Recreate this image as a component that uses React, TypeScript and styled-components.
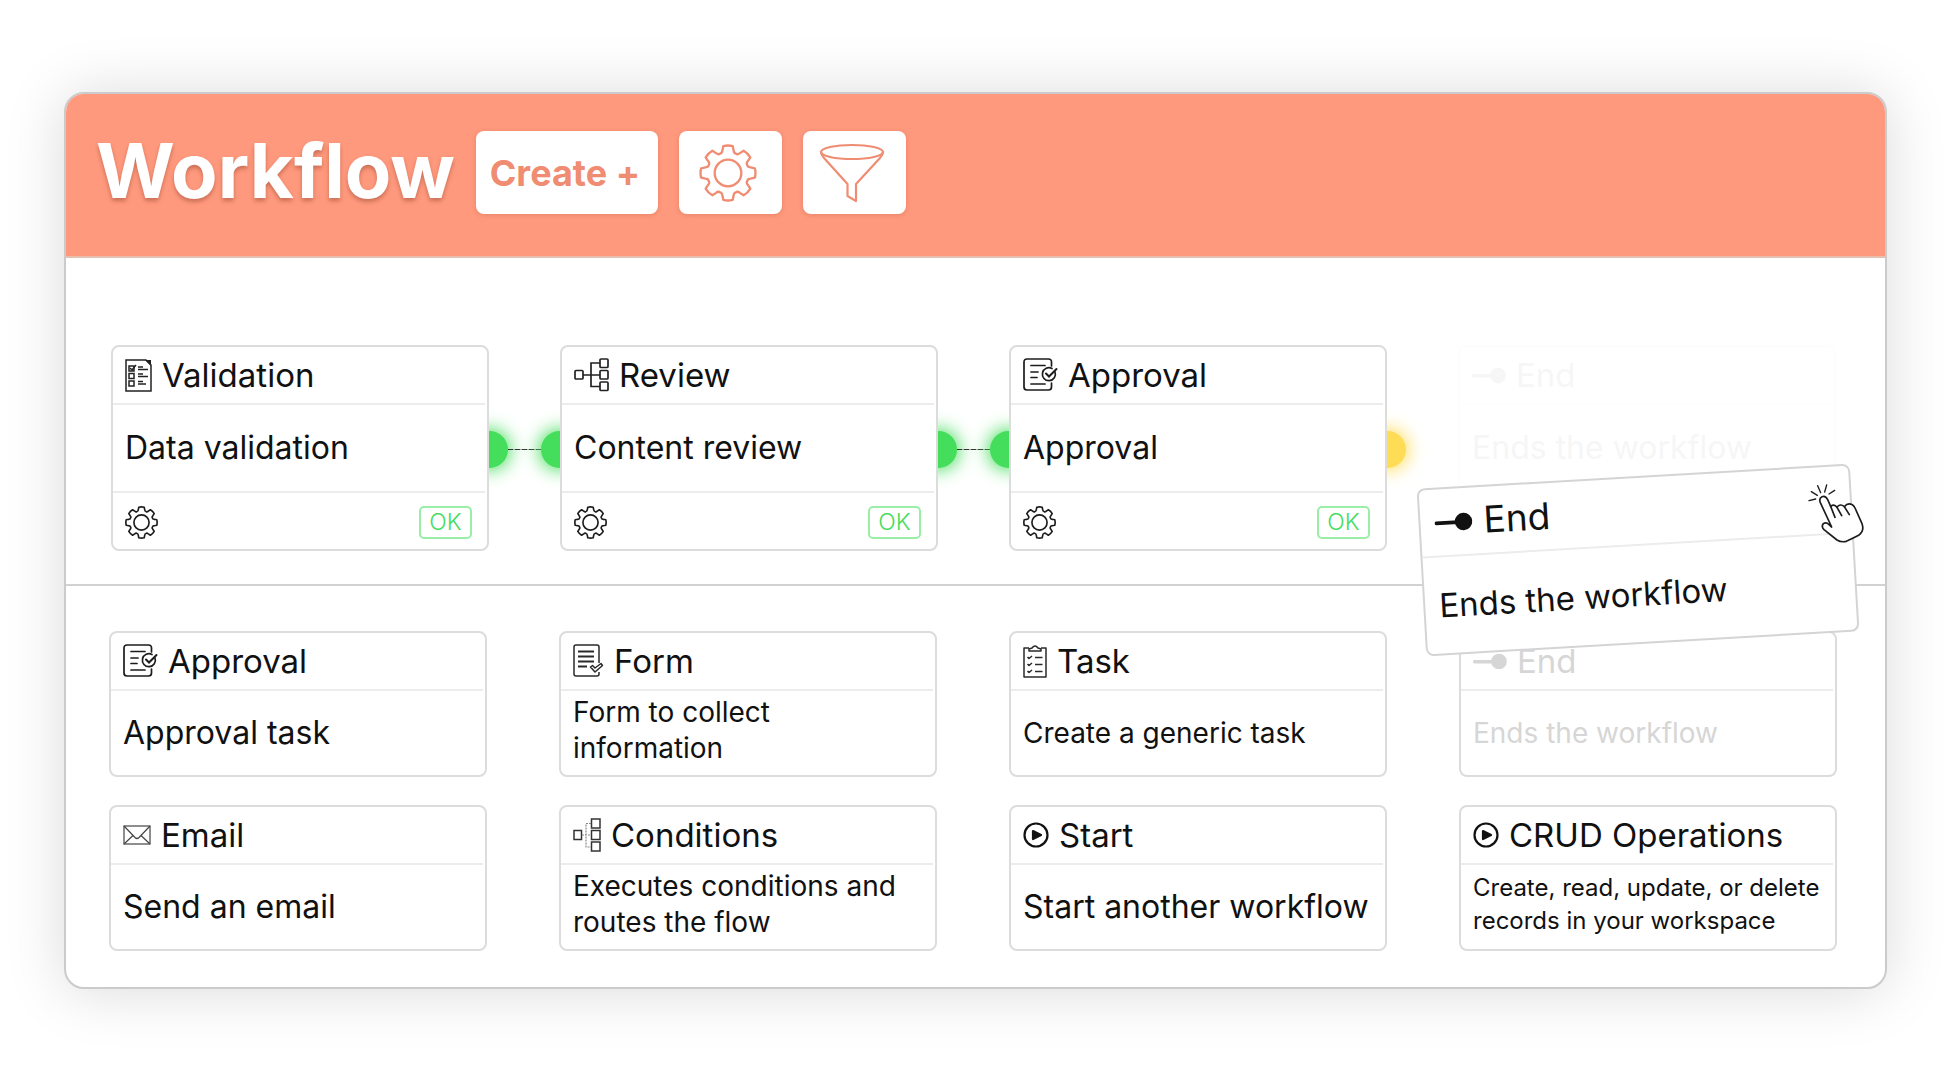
import React from "react";
import styled, { createGlobalStyle, css } from "styled-components";

const coral = "#ff997d";
const coralInk = "#f08c72";
const green = "#45dd5c";
const yellow = "#ffdc55";

const GlobalStyle = createGlobalStyle`
  *, *::before, *::after { box-sizing: border-box; }
  body {
    margin: 0;
    background: #fff;
    color: #111;
    font-family: Inter, "Open Sans", sans-serif;
  }
  h1, h2, p { margin: 0; font-weight: 400; }
  button { font: inherit; cursor: pointer; }
  svg { display: block; flex: none; }
`;

const Page = styled.div`
  padding: 92px 63px 91px 64px;
  overflow: hidden;
`;

const Frame = styled.main`
  border: 2px solid #cbcbcb;
  border-radius: 20px;
  background: #fff;
  box-shadow: 0 2px 60px rgba(0, 0, 0, 0.15);
`;

const Toolbar = styled.header`
  display: flex;
  align-items: center;
  gap: 21px;
  padding: 37px 30px 42px;
  background: ${coral};
  border-bottom: 2px solid #e6bfae;
  border-radius: 18px 18px 0 0;
`;

const Title = styled.h1`
  padding-bottom: 5px;
  font-size: 76px;
  line-height: 78px;
  font-weight: 700;
  color: #fff;
  text-shadow: 0 3px 4px rgba(120, 50, 30, 0.4);
`;

const ToolButton = styled.button<{ $wide?: boolean }>`
  display: flex;
  align-items: center;
  justify-content: center;
  width: ${(p) => (p.$wide ? 182 : 103)}px;
  height: 83px;
  padding: 0 4px 0 0;
  border: 0;
  border-radius: 8px;
  background: #fff;
  color: ${coralInk};
  font-size: 36px;
  font-weight: 700;
  white-space: nowrap;
  box-shadow: 0 1px 5px rgba(160, 70, 40, 0.25);
`;

const Board = styled.section`
  display: grid;
  grid-template-columns: repeat(4, minmax(0, 1fr));
  gap: 71px;
  padding: 87px 49px 33px 45px;
  border-bottom: 2px solid #d2d2d2;
`;

const Library = styled.section`
  display: grid;
  grid-template-columns: repeat(4, minmax(0, 1fr));
  gap: 28px 72px;
  padding: 45px 48px 36px 43px;
`;

const Slot = styled.div`
  position: relative;
`;

type Tone = "normal" | "muted" | "ghost";

const tones = {
  normal: css``,
  muted: css`
    color: #d6d6d6;
  `,
  ghost: css`
    color: #000;
    opacity: 0.03;
  `,
};

const CardBox = styled.article<{ $tone: Tone }>`
  position: relative;
  z-index: 1;
  display: flex;
  flex-direction: column;
  border: 2px solid #dcdcdc;
  border-radius: 8px;
  background: #fff;
  ${(p) => tones[p.$tone]}
`;

const CardHead = styled.div`
  display: flex;
  align-items: center;
  gap: 10px;
  height: 58px;
  padding: 0 12px;
  margin-right: 2px;
  border-bottom: 2px solid #ececec;
`;

const CardTitle = styled.h2`
  font-size: 33px;
  line-height: 40px;
  white-space: nowrap;
`;

type TextSize = "large" | "medium" | "small";

const textSizes = {
  large: css`
    font-size: 32px;
    line-height: 40px;
  `,
  medium: css`
    font-size: 28px;
    line-height: 36px;
  `,
  small: css`
    font-size: 24px;
    line-height: 33px;
  `,
};

const CardText = styled.p<{ $size: TextSize; $tall?: boolean; $raised?: boolean }>`
  display: flex;
  align-items: center;
  height: ${(p) => (p.$tall ? 86 : 84)}px;
  padding: 0 0 ${(p) => (p.$raised ? 6 : 0)}px 12px;
  white-space: pre;
  ${(p) => textSizes[p.$size]}
`;

const CardFoot = styled.div`
  display: flex;
  align-items: center;
  justify-content: space-between;
  height: 58px;
  padding: 2px 13px 0 12px;
  margin-right: 2px;
  border-top: 2px solid #ececec;
`;

const GhostFoot = styled(CardFoot)`
  border-top-color: transparent;
`;

const IconButton = styled.button`
  padding: 0;
  border: 0;
  background: none;
  color: #1c1c1c;
`;

const Badge = styled.span`
  display: flex;
  align-items: center;
  justify-content: center;
  width: 53px;
  height: 33px;
  border: 2px solid #9aeea8;
  border-radius: 5px;
  color: ${green};
  font-size: 23px;
  font-weight: 300;
`;

const Link = styled.div<{ $open?: boolean }>`
  position: absolute;
  left: 100%;
  top: 86px;
  width: 71px;
  height: 37px;
  display: flex;
  align-items: center;
  justify-content: ${(p) => (p.$open ? "flex-start" : "center")};
`;

const Dot = styled.span<{ $color: string; $side: "start" | "end" }>`
  flex: none;
  width: 37px;
  height: 37px;
  border-radius: 50%;
  background: ${(p) => p.$color};
  box-shadow: 0 0 18px 2px ${(p) => p.$color};
  ${(p) => (p.$side === "start" ? "margin-left: -18px;" : "margin-right: -18px;")}
`;

const Wire = styled.span`
  flex: 1;
  height: 1px;
  background: repeating-linear-gradient(90deg, #333 0 5px, #aaa 5px 7px);
`;

const Dragged = styled.article`
  position: absolute;
  z-index: 3;
  left: -37px;
  top: 131px;
  width: calc(100% + 56px);
  border: 2px solid #d4d4d4;
  border-radius: 8px;
  background: #fff;
  transform: rotate(-3.3deg);
`;

const DraggedHead = styled(CardHead)`
  height: 68px;
  gap: 11px;
  padding: 0 14px;
`;

const DraggedTitle = styled(CardTitle)`
  font-size: 37px;
`;

const DraggedText = styled(CardText)`
  height: 96px;
  padding: 0 14px;
  font-size: 33px;
`;

const Pointer = styled.div`
  position: absolute;
  z-index: 4;
  right: -29px;
  top: 138px;
`;

/* ---------- drawings ---------- */

const gearPath = (() => {
  const at = (r: number, deg: number) => {
    const a = ((deg - 90) * Math.PI) / 180;
    return `${(50 + r * Math.cos(a)).toFixed(2)} ${(50 + r * Math.sin(a)).toFixed(2)}`;
  };
  let d = "";
  for (let i = 0; i < 8; i++) {
    const c = i * 45;
    d += `${i ? "L" : "M"}${at(40, c - 14)} L${at(47, c - 10)} Q${at(48.5, c)} ${at(47, c + 10)} L${at(40, c + 14)} Q${at(35, c + 17)} ${at(36, c + 22.5)} Q${at(35, c + 28)} ${at(40, c + 31)}`;
  }
  return d + "Z";
})();

const Gear = ({ size, stroke }: { size: number; stroke: number }) => (
  <svg width={size} height={size} viewBox="0 0 100 100" fill="none" stroke="currentColor" strokeWidth={stroke} strokeLinejoin="round">
    <path d={gearPath} />
    <circle cx="50" cy="50" r="23" />
  </svg>
);

const Funnel = () => (
  <svg width="66" height="60" viewBox="0 0 66 60" fill="none" stroke="currentColor" strokeWidth="2.200" strokeLinejoin="round">
    <ellipse cx="33" cy="9" rx="31" ry="7" />
    <path d="M2 9 Q2 12 5 15 L28.500 41 V53 L37 58 V41 L61 15 Q64 12 64 9" />
  </svg>
);

const ChecklistIcon = () => (
  <svg width="27" height="33" viewBox="0 0 27 33" fill="none" stroke="#222" strokeWidth="1.500">
    <path d="M1 1 H21 L26 6 V32 H1 Z" />
    <path d="M20 1 L26 7 V1 Z" fill="#222" stroke="none" />
    <rect x="4" y="7" width="5" height="5" />
    <rect x="4" y="14.500" width="5" height="5" />
    <rect x="4" y="22" width="5" height="5" />
    <path d="M5 9 L7 11 L11 6 M13 8 H18 M13 10.500 H23 M13 15 H18 M13 17.500 H23 M13 22.500 H18 M13 25 H21" />
  </svg>
);

const TreeIcon = () => (
  <svg width="35" height="34" viewBox="0 0 35 34" fill="none" stroke="#222" strokeWidth="1.700">
    <rect x="1" y="12.500" width="8" height="8.500" rx="1" />
    <rect x="26" y="1" width="8" height="8.500" rx="1" />
    <rect x="26" y="12.500" width="8" height="8.500" rx="1" />
    <rect x="26" y="24" width="8" height="8.500" rx="1" />
    <path d="M9 17 H26 M26 5 H17 V28.500 H26" />
  </svg>
);

const DottedTreeIcon = () => (
  <svg width="28" height="34" viewBox="0 0 28 34" fill="none" stroke="#333" strokeWidth="1.500">
    <rect x="1" y="12.500" width="7.500" height="9" />
    <rect x="18.500" y="1" width="8.500" height="9" />
    <rect x="18.500" y="12.500" width="8.500" height="9" />
    <rect x="18.500" y="24" width="8.500" height="9" />
    <path d="M9 17 H18 M18 5.500 H13 V29 H18" stroke="#888" strokeWidth="1.200" strokeDasharray="2 1" />
  </svg>
);

const ApprovalIcon = () => (
  <svg width="35" height="34" viewBox="0 0 35 34" fill="none" stroke="#1c1c1c" strokeWidth="1.700" strokeLinecap="round">
    <path d="M28.500 8 V4 Q28.500 1 25.500 1 H4 Q1 1 1 4 V29 Q1 32 4 32 H25.500 Q28.500 32 28.500 29 V25" />
    <path d="M8 7.500 H22 M8 14 H15 M8 19.500 H14 M8 26 H22" />
    <path d="M32 14 A6.500 6.500 0 1 1 29 10.500" />
    <path d="M23 15.500 L26 18.500 L33.500 11" strokeWidth="2" />
  </svg>
);

const FormIcon = () => (
  <svg width="31" height="34" viewBox="0 0 31 34" fill="none" stroke="#2a2a2a" strokeWidth="1.500" strokeLinejoin="round">
    <path d="M26 19 V3 Q26 1 24 1 H3 Q1 1 1 3 V30 Q1 32 3 32 H24 Q26 32 26 30 V28" />
    <path d="M5 7.500 H21 M5 12.500 H21 M5 17.500 H21 M5 22.500 H14" strokeWidth="1.800" />
    <path d="M17.500 23 L19.500 21.500 L22 24 L28 19.500 L29.500 21.500 L22 28 Z" fill="#fff" />
  </svg>
);

const ClipboardIcon = () => (
  <svg width="24" height="33" viewBox="0 0 24 33" fill="none" stroke="#2a2a2a" strokeWidth="1.500" strokeLinejoin="round">
    <path d="M6 3 H1 V32 H23 V3 H18" />
    <path d="M6 6 V4 L9 3 Q12 -1 15 3 L18 4 V6 Z" />
    <path d="M4.500 12 L6 13.500 L9 11 M4.500 19 L6 20.500 L9 18 M4.500 26 L6 27.500 L9 25 M12 12.500 H19.500 M12 19.500 H19.500 M12 26.500 H19.500" />
  </svg>
);

const EnvelopeIcon = () => (
  <svg width="28" height="20" viewBox="0 0 28 20" fill="none" stroke="#444" strokeWidth="1.200">
    <rect x="1" y="1" width="26" height="18" />
    <path d="M1 1 L12 12.500 Q14 14.500 16 12.500 L27 1 M1 19 L10 10.500 M27 19 L18 10.500" />
  </svg>
);

const PlayIcon = () => (
  <svg width="26" height="26" viewBox="0 0 26 26" fill="none" stroke="#111" strokeWidth="2.200">
    <circle cx="13" cy="13" r="11.500" />
    <path d="M10 9 L18 13 L10 17 Z" fill="#111" strokeLinejoin="round" />
  </svg>
);

const EndIcon = ({ width }: { width: number }) => (
  <svg width={width} height={width / 2} viewBox="0 0 36 18" fill="currentColor">
    <rect x="0" y="7.500" width="24" height="3.500" rx="1.500" />
    <circle cx="27.500" cy="9" r="8.300" />
  </svg>
);

const HandIcon = () => (
  <svg width="58" height="62" viewBox="1222 462 174 186" fill="none" stroke="#1c1c1c" strokeWidth="5" strokeLinecap="round" strokeLinejoin="round">
    <path
      fill="#fff"
      d="M1296 594 L1262 521 Q1257 508 1267 503 Q1278 499 1284 512 L1293 532 Q1304 524 1312 535 Q1321 522 1334 533 Q1344 520 1358 527 Q1363 530 1366 537 L1387 584 Q1395 606 1377 619 Q1360 628 1340 637 Q1325 641 1312 633 L1273 602 Q1264 592 1271 584 Q1280 578 1288 587 Z"
    />
    <path d="M1293 532 L1306 565 M1312 535 L1326 560 M1334 533 L1349 557" />
    <path d="M1228 515 L1248 510 M1235 488 L1253 499 M1254 470 L1263 491 M1281 468 L1275 489 M1305 484 L1288 495" strokeWidth="4" />
  </svg>
);

/* ---------- cards ---------- */

type CardProps = {
  icon: React.ReactNode;
  title: string;
  text: string;
  size?: TextSize;
  tone?: Tone;
  foot?: React.ReactNode;
};

const Card = ({ icon, title, text, size = "large", tone = "normal", foot }: CardProps) => (
  <CardBox $tone={tone}>
    <CardHead>
      {icon}
      <CardTitle>{title}</CardTitle>
    </CardHead>
    <CardText $size={size} $tall={Boolean(foot)} $raised={text.includes("\n")}>
      {text}
    </CardText>
    {foot}
  </CardBox>
);

const StatusFoot = () => (
  <CardFoot>
    <IconButton type="button" aria-label="Step settings">
      <Gear size={33} stroke={5} />
    </IconButton>
    <Badge>OK</Badge>
  </CardFoot>
);

const steps = [
  { icon: <ChecklistIcon />, title: "Validation", text: "Data validation" },
  { icon: <TreeIcon />, title: "Review", text: "Content review" },
  { icon: <ApprovalIcon />, title: "Approval", text: "Approval" },
];

const blocks: CardProps[] = [
  { icon: <ApprovalIcon />, title: "Approval", text: "Approval task" },
  { icon: <FormIcon />, title: "Form", text: "Form to collect\ninformation", size: "medium" },
  { icon: <ClipboardIcon />, title: "Task", text: "Create a generic task", size: "medium" },
  { icon: <EndIcon width={34} />, title: "End", text: "Ends the workflow", size: "medium", tone: "muted" },
  { icon: <EnvelopeIcon />, title: "Email", text: "Send an email" },
  { icon: <DottedTreeIcon />, title: "Conditions", text: "Executes conditions and\nroutes the flow", size: "medium" },
  { icon: <PlayIcon />, title: "Start", text: "Start another workflow" },
  { icon: <PlayIcon />, title: "CRUD Operations", text: "Create, read, update, or delete\nrecords in your workspace", size: "small" },
];

export default function App() {
  return (
    <Page>
      <GlobalStyle />
      <Frame>
        <Toolbar>
          <Title>Workflow</Title>
          <ToolButton type="button" $wide>
            Create +
          </ToolButton>
          <ToolButton type="button" aria-label="Settings">
            <Gear size={58} stroke={4} />
          </ToolButton>
          <ToolButton type="button" aria-label="Filter">
            <Funnel />
          </ToolButton>
        </Toolbar>

        <Board aria-label="Workflow steps">
          {steps.map((step, i) => (
            <Slot key={step.title}>
              <Card {...step} foot={<StatusFoot />} />
              {i < steps.length - 1 ? (
                <Link>
                  <Dot $color={green} $side="start" />
                  <Wire />
                  <Dot $color={green} $side="end" />
                </Link>
              ) : (
                <Link $open>
                  <Dot $color={yellow} $side="start" />
                </Link>
              )}
            </Slot>
          ))}
          <Slot>
            <Card icon={<EndIcon width={34} />} title="End" text="Ends the workflow" tone="ghost" foot={<GhostFoot />} />
            <Dragged>
              <DraggedHead>
                <EndIcon width={38} />
                <DraggedTitle>End</DraggedTitle>
              </DraggedHead>
              <DraggedText $size="large">Ends the workflow</DraggedText>
            </Dragged>
            <Pointer>
              <HandIcon />
            </Pointer>
          </Slot>
        </Board>

        <Library aria-label="Available blocks">
          {blocks.map((block) => (
            <Card key={block.title} {...block} />
          ))}
        </Library>
      </Frame>
    </Page>
  );
}
